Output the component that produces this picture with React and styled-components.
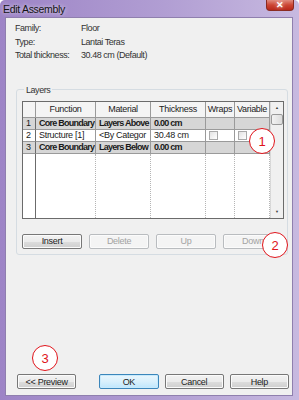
import styled, { createGlobalStyle } from "styled-components";

const GlobalStyle = createGlobalStyle`
	html, body {
		margin: 0;
		padding: 0;
		background: #ffffff;
	}
	* {
		box-sizing: border-box;
	}
`;

const Window = styled.div`
	position: relative;
	width: 299px;
	height: 400px;
	display: flex;
	flex-direction: column;
	background: linear-gradient(90deg, #9d84c6 0%, #b19ed3 55%, #c7b9e0 100%);
	border-radius: 5px 5px 0 0;
	padding: 0 6px 4px 5px;
	font-family: "Liberation Sans", Arial, sans-serif;
`;

const TitleBar = styled.div`
	flex-shrink: 0;
	height: 17px;
	display: flex;
	align-items: center;
	justify-content: space-between;
	margin-left: -2px;
	font-size: 10.5px;
	letter-spacing: -0.3px;
	color: #141414;
	text-shadow: 0 0 4px rgba(255, 255, 255, 0.8);
`;

const CloseButton = styled.div`
	width: 28px;
	height: 11px;
	align-self: flex-start;
	margin-right: -1px;
	border-radius: 0 0 4px 4px;
	border: 1px solid #8a2a20;
	border-top: none;
	background: linear-gradient(180deg, #e08b7e 0%, #cc4533 50%, #b8281a 100%);
	display: flex;
	align-items: center;
	justify-content: center;
	color: #ffffff;
	font-size: 9px;
	font-weight: bold;
	letter-spacing: 0;
	line-height: 1;
`;

const Content = styled.div`
	flex: 1;
	min-height: 0;
	display: flex;
	flex-direction: column;
	background: #f0f0f0;
	border: 1px solid #8f7fae;
	padding: 4px 3px 6px 9px;
	color: #222;
`;

const InfoGrid = styled.div`
	display: grid;
	grid-template-columns: 66px 1fr;
	row-gap: 1px;
	line-height: 12.5px;
	font-size: 9px;
	letter-spacing: -0.45px;
	color: #333;
`;

const GroupBox = styled.fieldset`
	margin: 23px 0 0 1px;
	padding: 6px 3px 5px 5px;
	width: 272px;
	min-width: 0;
	border: 1px solid #d5dce2;
	border-radius: 3px;
`;

const Legend = styled.legend`
	padding: 0 2px;
	margin-left: 2px;
	font-size: 9px;
	letter-spacing: -0.45px;
	color: #333;
`;

const TableFrame = styled.div`
	display: flex;
	height: 118px;
	border: 1px solid #6b6b6b;
	background: #ffffff;
`;

const Grid = styled.div`
	flex: 1;
	display: flex;
	flex-direction: column;
	font-size: 9px;
`;

const Row = styled.div`
	display: grid;
	grid-template-columns: 13px 60px 55px 55px 29px 35px;
	height: ${(p) => (p.$head ? "16px" : "12px")};
	flex: ${(p) => (p.$fill ? 1 : "none")};
	background: ${(p) => (p.$head ? "#f4f4f4" : p.$shade ? "#d6d6d6" : "#ffffff")};
	font-weight: ${(p) => (p.$bold ? "bold" : "normal")};
	letter-spacing: ${(p) => (p.$bold ? "-0.75px" : "-0.3px")};
`;

const HeadCell = styled.div`
	display: flex;
	align-items: center;
	justify-content: center;
	border-right: 1px solid #9a9a9a;
	border-bottom: 1px solid #9a9a9a;
	color: #222;
`;

const Cell = styled.div`
	display: flex;
	align-items: center;
	padding-left: 3px;
	white-space: nowrap;
	overflow: hidden;
	border-right: 1px solid #9a9a9a;
	border-bottom: 1px solid #9a9a9a;
	color: #1a1a1a;
`;

const NumCell = styled(Cell)`
	font-weight: normal;
	letter-spacing: 0;
	border-right: 1px solid #6b6b6b;
`;

const FillCell = styled.div`
	border-right: 1px dotted #b5b5b5;
	&:first-child {
		border-right: 1px solid #6b6b6b;
	}
`;

const CheckBox = styled.span`
	display: block;
	width: 9px;
	height: 9px;
	border: 1px solid #a9a9a9;
	background: linear-gradient(135deg, #e2e2e2, #ffffff);
`;

const ScrollBar = styled.div`
	width: 14px;
	display: flex;
	flex-direction: column;
	align-items: center;
	background: #f0f0f0;
	border-left: 1px solid #d8d8d8;
`;

const Arrow = styled.div`
	height: 12px;
	display: flex;
	align-items: center;
	justify-content: center;
	font-size: 4px;
	color: #404040;
`;

const Thumb = styled.div`
	width: 12px;
	height: 11px;
	border: 1px solid #9a9a9a;
	border-radius: 2px;
	background: linear-gradient(90deg, #f3f3f3, #dcdcdc);
`;

const Spacer = styled.div`
	flex: 1;
`;

const ButtonRow = styled.div`
	display: flex;
	gap: ${(p) => p.$gap || "7px"};
	margin-top: ${(p) => p.$top || "15px"};
	padding-left: ${(p) => p.$left || "0"};
`;

const Button = styled.div`
	width: 60px;
	height: 15px;
	display: flex;
	align-items: center;
	justify-content: center;
	border-radius: 2px;
	font-size: 9px;
	letter-spacing: -0.3px;
	border: 1px solid ${(p) => (p.$disabled ? "#b9bcbf" : p.$default ? "#3b86bb" : "#777777")};
	color: ${(p) => (p.$disabled ? "#a3a3a3" : "#222")};
	background: ${(p) =>
		p.$disabled
			? "#f4f4f4"
			: p.$default
			? "linear-gradient(180deg, #eaf6fd 0%, #d9f0fc 50%, #bee6fd 100%)"
			: "linear-gradient(180deg, #f2f2f2 0%, #ebebeb 50%, #dddddd 51%, #cfcfcf 100%)"};
	box-shadow: ${(p) => (p.$default ? "inset 0 0 0 1px #c8eafc" : "inset 0 0 0 1px #fbfbfb")};
	margin-right: ${(p) => p.$after || "0"};
`;

const Marker = styled.div`
	position: absolute;
	left: ${(p) => p.$x}px;
	top: ${(p) => p.$y}px;
	width: 26px;
	height: 26px;
	border-radius: 50%;
	border: 1.5px solid #e0141b;
	background: #ffffff;
	color: #e0141b;
	display: flex;
	align-items: center;
	justify-content: center;
	font-family: "Liberation Sans", Arial, sans-serif;
	font-size: 13px;
`;

const headers = ["", "Function", "Material", "Thickness", "Wraps", "Variable"];

const layers = [
	{ n: 1, fn: "Core Boundary", mat: "Layers Above", th: "0.00 cm", boundary: true },
	{ n: 2, fn: "Structure [1]", mat: "<By Categor", th: "30.48 cm", boundary: false },
	{ n: 3, fn: "Core Boundary", mat: "Layers Below", th: "0.00 cm", boundary: true },
];

const App = () => {
	return (
		<>
			<GlobalStyle />
			<Window>
				<TitleBar>
					<span>Edit Assembly</span>
					<CloseButton>✕</CloseButton>
				</TitleBar>
				<Content>
					<InfoGrid>
						<span>Family:</span>
						<span>Floor</span>
						<span>Type:</span>
						<span>Lantai Teras</span>
						<span>Total thickness:</span>
						<span>30.48 cm (Default)</span>
					</InfoGrid>

					<GroupBox>
						<Legend>Layers</Legend>
						<TableFrame>
							<Grid>
								<Row $head>
									{headers.map((h, i) => (
										<HeadCell key={i}>{h}</HeadCell>
									))}
								</Row>
								{layers.map((l) => (
									<Row key={l.n} $shade={l.boundary} $bold={l.boundary}>
										<NumCell>{l.n}</NumCell>
										<Cell>{l.fn}</Cell>
										<Cell>{l.mat}</Cell>
										<Cell>{l.th}</Cell>
										<Cell>{!l.boundary && <CheckBox />}</Cell>
										<Cell>{!l.boundary && <CheckBox />}</Cell>
									</Row>
								))}
								<Row $fill>
									{headers.map((h, i) => (
										<FillCell key={i} />
									))}
								</Row>
							</Grid>
							<ScrollBar>
								<Arrow>▲</Arrow>
								<Thumb />
								<Spacer />
								<Arrow>▼</Arrow>
							</ScrollBar>
						</TableFrame>
						<ButtonRow>
							<Button>Insert</Button>
							<Button $disabled>Delete</Button>
							<Button $disabled>Up</Button>
							<Button $disabled>Down</Button>
						</ButtonRow>
					</GroupBox>

					<Spacer />
					<ButtonRow $top="0" $left="2px" $gap="6px">
						<Button $after="17px">&lt;&lt; Preview</Button>
						<Button $default>OK</Button>
						<Button>Cancel</Button>
						<Button>Help</Button>
					</ButtonRow>
				</Content>
				<Marker $x={249} $y={128}>1</Marker>
				<Marker $x={262} $y={232}>2</Marker>
				<Marker $x={32} $y={345}>3</Marker>
			</Window>
		</>
	);
};

export default App;
